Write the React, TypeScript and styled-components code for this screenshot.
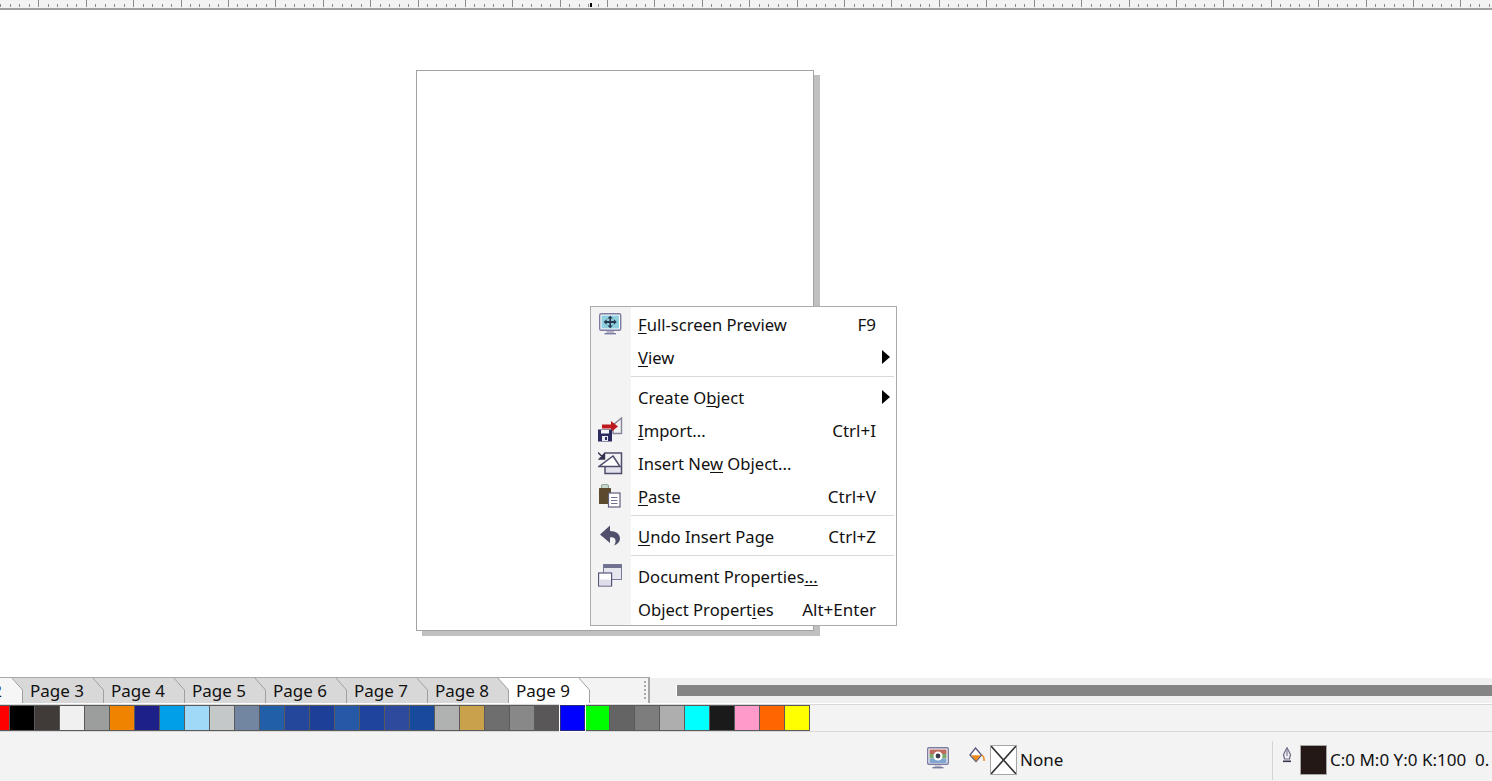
import React from 'react';
import styled, { createGlobalStyle } from 'styled-components';

const GlobalStyle = createGlobalStyle`
  html, body {
    margin: 0;
    height: 100%;
    overflow: hidden;
    background: #fff;
    font-family: "Noto Sans", "Open Sans", sans-serif;
    color: #111;
  }
`;

const Shell = styled.div`
  position: relative;
  display: flex;
  flex-direction: column;
  width: 1492px;
  height: 781px;
  overflow: hidden;
`;

const RulerBar = styled.div`
  height: 8px;
  flex: none;
  background: #f3f3f3;
  border-bottom: 2px solid #a0a0a0;

  svg {
    display: block;
  }
`;

const Canvas = styled.main`
  flex: 1;
  min-height: 0;
  padding: 60px 0 0 416px;
  background: #fff;
`;

const PageSheet = styled.div`
  box-sizing: border-box;
  width: 398px;
  height: 561px;
  background: #fff;
  border: 1px solid #a3a3a3;
  box-shadow: 6px 5px 0 #c0c0c0;
`;

const Menu = styled.div`
  position: absolute;
  left: 590px;
  top: 306px;
  box-sizing: border-box;
  width: 307px;
  height: 320px;
  border: 1px solid #aaa;
  background: linear-gradient(to right, #f3f3f3 40px, #fff 40px);
  font-size: 16.6px;
`;

const MenuRow = styled.div`
  display: flex;
  align-items: center;
  height: 33px;
  white-space: nowrap;
`;

const IconCell = styled.div`
  display: flex;
  align-items: center;
  width: 40px;
  height: 33px;
  padding-left: 7px;
  box-sizing: border-box;

  svg {
    display: block;
  }
`;

const MenuLabel = styled.span`
  margin-left: 7px;
  flex: 1;
  padding-top: 2px;

  u {
    text-underline-offset: 2px;
    text-decoration-thickness: 1px;
  }
`;

const Shortcut = styled.span`
  margin-right: 20px;
  padding-top: 2px;
  font-size: 17px;
`;

const SubArrow = styled.span`
  width: 0;
  height: 0;
  margin-right: 6px;
  border-left: 8px solid #000;
  border-top: 7px solid transparent;
  border-bottom: 7px solid transparent;
`;

const MenuDivider = styled.div`
  height: 7px;
  display: flex;
  align-items: center;
  margin: 0 2px 0 40px;

  &::after {
    content: '';
    flex: 1;
    height: 1px;
    background: #d9d9d9;
  }
`;

const TabStrip = styled.div`
  display: flex;
  flex: none;
  height: 26px;
`;

const TabTrack = styled.div`
  position: relative;
  box-sizing: border-box;
  display: flex;
  width: 650px;
  height: 26px;
  overflow: hidden;
  background: #f3f3f3;
  border-top: 1px solid #a8a8a8;
  border-right: 2px solid #a8a8a8;
`;

const TabItem = styled.div<{ $z: number }>`
  position: relative;
  z-index: ${p => p.$z};
  flex: none;
  width: 93px;
  height: 25px;
  margin-right: -12px;
  font-size: 17px;
  line-height: 26px;

  svg {
    position: absolute;
    inset: 0;
  }

  span {
    position: relative;
    margin-left: 19px;
  }

  &:first-child {
    margin-left: -70px;

    span {
      margin-left: 18px;
    }
  }
`;

const Grip = styled.div`
  position: absolute;
  z-index: 20;
  right: 2px;
  top: 3px;
  display: grid;
  gap: 2px;

  i {
    display: block;
    width: 2px;
    height: 2px;
    background: #aaa;
  }
`;

const ScrollZone = styled.div`
  flex: 1;
  display: flex;
  align-items: center;
  padding-left: 26px;
  background: #f0f0f0;
  margin-top: 1px;
`;

const ScrollThumb = styled.div`
  flex: 1;
  height: 11px;
  margin-top: -1px;
  border-left: 1px solid #fff;
  background: #858585;
`;

const Palette = styled.div`
  flex: none;
  display: flex;
  height: 28px;
  box-sizing: border-box;
  margin-top: 1px;
  margin-left: -15px;
  background: #f3f3f3;
  border-top: 1px solid #d8d8d8;
  border-bottom: 1px solid #d8d8d8;
`;

const Swatch = styled.div<{ $color: string; $active?: boolean }>`
  box-sizing: border-box;
  flex: none;
  width: 25px;
  height: 26px;
  background: ${p => p.$color};
  border: 1px solid #5a5a5a;
  border-left-width: ${p => (p.$active ? 1 : 0)}px;
  border-color: ${p => (p.$active ? '#2a2a7a' : '#5a5a5a')};
  outline: ${p => (p.$active ? '1px solid #fff' : 'none')};
  outline-offset: 0;
  position: relative;
  z-index: ${p => (p.$active ? 1 : 0)};
`;

const StatusBar = styled.footer`
  flex: none;
  height: 49px;
  display: flex;
  align-items: flex-start;
  padding-left: 927px;
  background: #f3f3f3;
  font-size: 17px;
  white-space: nowrap;
`;

const StatusFill = styled.div`
  display: flex;
  align-items: flex-start;
  width: 345px;
  flex: none;
`;

const StatusIcon = styled.div<{ $gap?: number }>`
  margin: 15px 0 0 ${p => p.$gap ?? 0}px;
  flex: none;

  svg {
    display: block;
  }
`;

const ColorBox = styled.div<{ $gap: number; $fill: string }>`
  box-sizing: border-box;
  flex: none;
  width: 27px;
  height: 30px;
  margin: 13px 0 0 ${p => p.$gap}px;
  background: ${p => p.$fill};
  border: 1px solid #a6a6a6;

  svg {
    display: block;
  }
`;

const StatusText = styled.span`
  margin: 13px 0 0 3px;
  line-height: 30px;
`;

const StatusDivider = styled.div`
  flex: none;
  width: 1px;
  height: 39px;
  margin-top: 9px;
  background: #d4d4d4;
`;

const SWATCHES = [
  '#ff0000', '#000000', '#403a38', '#f0f0f0', '#9c9e9d', '#f08300', '#1d2088', '#00a0e9', '#a0d8f7',
  '#c5c8c8', '#7286a2', '#2160a8', '#24479b', '#1e3f97', '#2558a6', '#1f449d', '#2e4a9c', '#174a9c',
  '#b0b2b1', '#c9a14a', '#6e6e6e', '#888888', '#595757', '#0000ff', '#00ff00', '#646464', '#7d7d7d',
  '#aeaeae', '#00ffff', '#1a1a1a', '#ff9acb', '#ff6600', '#ffff00',
];

const TABS = [
  { label: 'Page 2', fill: '#f6f6f6' },
  { label: 'Page 3', fill: '#d8d8d8' },
  { label: 'Page 4', fill: '#d8d8d8' },
  { label: 'Page 5', fill: '#d8d8d8' },
  { label: 'Page 6', fill: '#d8d8d8' },
  { label: 'Page 7', fill: '#d8d8d8' },
  { label: 'Page 8', fill: '#d8d8d8' },
  { label: 'Page 9', fill: '#ffffff' },
];

function Ruler() {
  const ticks: React.ReactNode[] = [];
  for (let i = -1; i < 33; i++) {
    const x = 38.3 + i * 47.4;
    ticks.push(<rect key={`M${i}`} x={Math.round(x)} y={0} width={1} height={7} fill="#8c8c8c" />);
    for (let j = 1; j < 5; j++) {
      const mx = Math.round(x + j * 9.48);
      ticks.push(<rect key={`m${i}-${j}`} x={mx} y={4} width={1} height={3} fill="#8c8c8c" />);
    }
  }
  return (
    <svg width="1492" height="8">
      {ticks}
      <rect x={590} y={3} width={2} height={4} fill="#000" />
    </svg>
  );
}

const PreviewIcon = () => (
  <svg width="26" height="26" viewBox="0 0 26 26">
    <rect x="1.7" y="2.7" width="21" height="16.6" rx="1.5" fill="#fff" stroke="#7b7ba2" strokeWidth="1.4" />
    <rect x="3.5" y="4.5" width="17.5" height="13" fill="#8fd0e0" />
    <rect x="8.5" y="20" width="7.5" height="2" fill="#b5b5c5" />
    <rect x="6.5" y="22" width="11.5" height="1.4" fill="#7b7ba2" />
    <path
      d="M12.2 4.8 L15 7.6 H13 V10 H15.8 V8.2 L18.8 11 L15.8 13.8 V12 H13 V14.4 H15 L12.2 17.2 L9.4 14.4 H11.4 V12 H8.6 V13.8 L5.6 11 L8.6 8.2 V10 H11.4 V7.6 H9.4 Z"
      fill="#27384f"
    />
  </svg>
);

const ImportIcon = () => (
  <svg width="26" height="26" viewBox="0 0 26 26">
    <path d="M15 8 L23.5 1 V16.5 H15 Z" fill="#f2f2f2" stroke="#85859a" strokeWidth="1.4" />
    <path d="M4 7.5 H13 V4 L20 9.5 L13 15 V11.5 H4 Z" fill="#bd1a1f" />
    <rect x="0" y="12.5" width="14" height="12" fill="#2b2b5f" />
    <rect x="3" y="13" width="8" height="3.5" fill="#f4f4f8" />
    <rect x="4" y="19" width="6" height="5" fill="#e8e8f0" />
    <rect x="7" y="20" width="2" height="3" fill="#2b2b5f" />
  </svg>
);

const InsertIcon = () => (
  <svg width="26" height="26" viewBox="0 0 26 26">
    <path d="M7 17 H23.5 V23.5 H7 Z" fill="#e2e2ec" />
    <path d="M7 3 H23.5 V23.5 H7 V17" fill="none" stroke="#4d4d6b" strokeWidth="1.5" />
    <path d="M15 6 L22 16.5 H1 Z" fill="#fff" stroke="#4d4d6b" strokeWidth="1.5" />
    <path d="M0 2.5 L5 7.5 M6.5 3.5 V9 H1.5 Z" fill="#33334f" stroke="#33334f" strokeWidth="1.4" />
  </svg>
);

const PasteIcon = () => (
  <svg width="26" height="26" viewBox="0 0 26 26">
    <rect x="1" y="5" width="12" height="16" rx="0.5" fill="#5d4a2e" />
    <path d="M3.5 5 V3.5 Q3.5 1.5 5.5 1.5 H8.5 Q10.5 1.5 10.5 3.5 V5" fill="#c8d8cf" stroke="#8fa69b" strokeWidth="1.2" />
    <rect x="10.5" y="10" width="11.5" height="14" fill="#fff" stroke="#5f5f7d" strokeWidth="1.2" />
    <path d="M13 14.5 H19.5 M13 17.5 H19.5 M13 20.5 H19.5" stroke="#70708c" strokeWidth="1" />
  </svg>
);

const UndoIcon = () => (
  <svg width="26" height="26" viewBox="0 0 26 26">
    <path
      d="M2 11.5 L12 2.5 V8 C18 8 22 11 22 15.5 C22 18.5 20 21 16 22.5 C18 20 18.5 15.5 15 14.5 C14 14.3 13 14.3 12 14.5 V20 Z"
      fill="#50506c"
    />
  </svg>
);

const DocPropsIcon = () => (
  <svg width="26" height="26" viewBox="0 0 26 26">
    <rect x="5.5" y="1.5" width="18" height="15" fill="#e6e6ef" stroke="#7a7a9a" />
    <rect x="5.5" y="1.5" width="18" height="3.5" fill="#6f6f8f" />
    <rect x="0.6" y="10" width="13" height="13" fill="#fff" stroke="#55557a" strokeWidth="1.2" />
    <rect x="1.2" y="16.5" width="11.8" height="6" fill="#dedeea" />
  </svg>
);

const ScreenStatusIcon = () => (
  <svg width="22" height="22" viewBox="0 0 22 22">
    <rect x="0.7" y="0.7" width="20.6" height="16.6" rx="1.2" fill="#fff" stroke="#7b7ba2" strokeWidth="1.4" />
    <rect x="2.5" y="2.5" width="17" height="4.5" fill="#bd6a60" />
    <rect x="2.5" y="7" width="17" height="4.5" fill="#7ea870" />
    <rect x="2.5" y="11.5" width="17" height="4.5" fill="#7fa5d0" />
    <circle cx="11" cy="9" r="4.5" fill="#fff" />
    <circle cx="11" cy="9" r="2.4" fill="#3b3b4f" />
    <rect x="7.5" y="18.5" width="7" height="1.5" fill="#b5b5c5" />
    <rect x="5.5" y="20" width="11" height="1.4" fill="#7b7ba2" />
  </svg>
);

const BucketIcon = () => (
  <svg width="16" height="17" viewBox="0 0 16 17">
    <path d="M6.5 1 L12.5 8 L7 14.5 L1 8 Z" fill="#fff" stroke="#55557a" strokeWidth="1.3" />
    <path d="M2.2 8.3 H11.8 L7 14 Z" fill="#ee8a1d" />
    <path d="M13 8 Q15.5 10 15 14" fill="none" stroke="#ee8a1d" strokeWidth="1.5" />
  </svg>
);

const PenIcon = () => (
  <svg width="10" height="16" viewBox="0 0 10 16">
    <path d="M5 0.8 L8.5 7.5 L7.5 12 H2.5 L1.5 7.5 Z" fill="#eeeef4" stroke="#6a6a85" strokeWidth="1.2" />
    <path d="M5 3 V9" stroke="#6a6a85" />
    <rect x="1" y="13.5" width="8" height="1.6" fill="#35354f" />
  </svg>
);

const CrossIcon = () => (
  <svg width="25" height="28" viewBox="0 0 25 28" preserveAspectRatio="none">
    <path d="M0 0 L25 28 M25 0 L0 28" stroke="#333" strokeWidth="1.6" />
  </svg>
);

function App() {
  return (
    <>
      <GlobalStyle />
      <Shell>
        <RulerBar>
          <Ruler />
        </RulerBar>
        <Canvas>
          <PageSheet />
        </Canvas>

        <Menu>
          <MenuRow>
            <IconCell>
              <PreviewIcon />
            </IconCell>
            <MenuLabel>
              <u>F</u>ull-screen Preview
            </MenuLabel>
            <Shortcut>F9</Shortcut>
          </MenuRow>
          <MenuRow>
            <IconCell />
            <MenuLabel>
              <u>V</u>iew
            </MenuLabel>
            <SubArrow />
          </MenuRow>
          <MenuDivider />
          <MenuRow>
            <IconCell />
            <MenuLabel>
              Create O<u>b</u>ject
            </MenuLabel>
            <SubArrow />
          </MenuRow>
          <MenuRow>
            <IconCell>
              <ImportIcon />
            </IconCell>
            <MenuLabel>
              <u>I</u>mport...
            </MenuLabel>
            <Shortcut>Ctrl+I</Shortcut>
          </MenuRow>
          <MenuRow>
            <IconCell>
              <InsertIcon />
            </IconCell>
            <MenuLabel>
              Insert Ne<u>w</u> Object...
            </MenuLabel>
          </MenuRow>
          <MenuRow>
            <IconCell>
              <PasteIcon />
            </IconCell>
            <MenuLabel>
              <u>P</u>aste
            </MenuLabel>
            <Shortcut>Ctrl+V</Shortcut>
          </MenuRow>
          <MenuDivider />
          <MenuRow>
            <IconCell>
              <UndoIcon />
            </IconCell>
            <MenuLabel>
              <u>U</u>ndo Insert Page
            </MenuLabel>
            <Shortcut>Ctrl+Z</Shortcut>
          </MenuRow>
          <MenuDivider />
          <MenuRow>
            <IconCell>
              <DocPropsIcon />
            </IconCell>
            <MenuLabel>
              Document Properties<u>...</u>
            </MenuLabel>
          </MenuRow>
          <MenuRow>
            <IconCell />
            <MenuLabel>
              Object Propert<u>i</u>es
            </MenuLabel>
            <Shortcut>Alt+Enter</Shortcut>
          </MenuRow>
        </Menu>

        <TabStrip>
          <TabTrack>
            {TABS.map((tab, i) => (
              <TabItem key={tab.label} $z={TABS.length - i}>
                <svg width="93" height="25" viewBox="0 0 93 25">
                  <path d="M0 -1 H81 L93 12 V25 H0 Z" fill={tab.fill} />
                  <path d="M81 -1 L92.5 12 V25" fill="none" stroke="#a0a0a0" />
                </svg>
                <span>{tab.label}</span>
              </TabItem>
            ))}
            <Grip>
              {[0, 1, 2, 3, 4].map(i => (
                <i key={i} />
              ))}
            </Grip>
          </TabTrack>
          <ScrollZone>
            <ScrollThumb />
          </ScrollZone>
        </TabStrip>

        <Palette>
          {SWATCHES.map((color, i) => (
            <Swatch key={`${color}${i}`} $color={color} $active={color === '#0000ff'} />
          ))}
        </Palette>

        <StatusBar>
          <StatusFill>
            <StatusIcon>
              <ScreenStatusIcon />
            </StatusIcon>
            <StatusIcon $gap={20}>
              <BucketIcon />
            </StatusIcon>
            <ColorBox $gap={5} $fill="#fff">
              <CrossIcon />
            </ColorBox>
            <StatusText>None</StatusText>
          </StatusFill>
          <StatusDivider />
          <StatusIcon $gap={9}>
            <PenIcon />
          </StatusIcon>
          <ColorBox $gap={8} $fill="#231815" />
          <StatusText>C:0 M:0 Y:0 K:100&nbsp;&nbsp;0.</StatusText>
        </StatusBar>
      </Shell>
    </>
  );
}

export default App;
